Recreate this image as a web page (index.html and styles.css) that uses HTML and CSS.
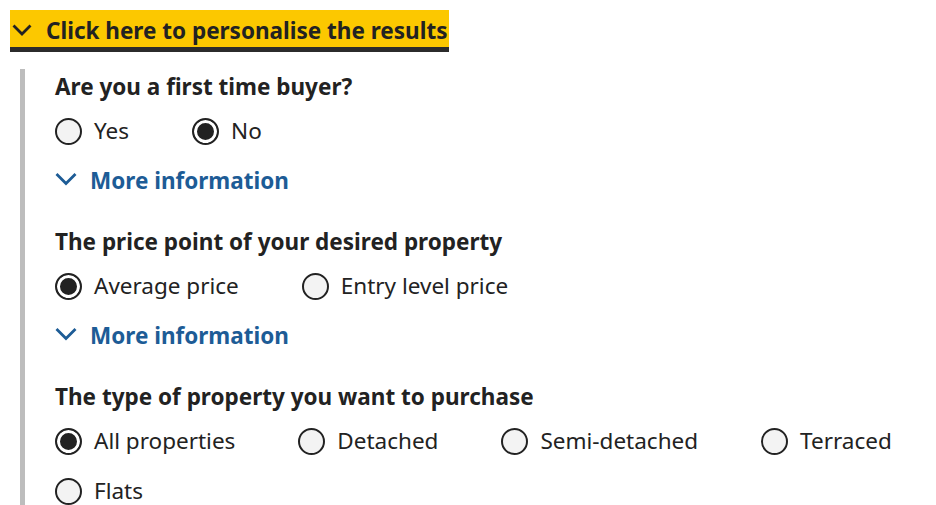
FILE: index.html
```html
<!DOCTYPE html>
<html lang="en">
<head>
<meta charset="utf-8">
<title>Personalise results</title>
<link rel="stylesheet" href="styles.css">
</head>
<body>
<div class="toggle">
  <svg class="chev" viewBox="0 0 20 20" width="20" height="20"><path d="M1.5 5.5 L10 14 L18.5 5.5" fill="none" stroke="#222" stroke-width="2.8"/></svg>
  <span>Click here to personalise the results</span>
</div>
<div class="panel">
  <div class="group">
    <div class="q">Are you a first time buyer?</div>
    <div class="opts">
      <label class="opt"><span class="radio"></span>Yes</label>
      <label class="opt"><span class="radio on"></span>No</label>
    </div>
    <div class="more"><svg class="mchev" viewBox="0 0 22 20" width="22" height="20"><path d="M1.5 5 L11 14.5 L20.5 5" fill="none" stroke="#1d5c96" stroke-width="2.8"/></svg>More information</div>
  </div>
  <div class="group">
    <div class="q">The price point of your desired property</div>
    <div class="opts">
      <label class="opt"><span class="radio on"></span>Average price</label>
      <label class="opt"><span class="radio"></span>Entry level price</label>
    </div>
    <div class="more"><svg class="mchev" viewBox="0 0 22 20" width="22" height="20"><path d="M1.5 5 L11 14.5 L20.5 5" fill="none" stroke="#1d5c96" stroke-width="2.8"/></svg>More information</div>
  </div>
  <div class="group">
    <div class="q">The type of property you want to purchase</div>
    <div class="opts">
      <label class="opt"><span class="radio on"></span>All properties</label>
      <label class="opt"><span class="radio"></span>Detached</label>
      <label class="opt"><span class="radio"></span>Semi-detached</label>
      <label class="opt"><span class="radio"></span>Terraced</label>
      <label class="opt"><span class="radio"></span>Flats</label>
    </div>
  </div>
</div>
</body>
</html>
```
FILE: styles.css
```css
html, body { margin: 0; padding: 0; background: #fff; overflow: hidden; }
body {
  padding: 10px;
  font-family: "Noto Sans", "Open Sans", sans-serif;
  color: #222;
  font-size: 22.5px;
  height: 485px;
}
.toggle {
  box-sizing: border-box;
  display: inline-flex;
  align-items: center;
  background: #fcc800;
  border-bottom: 5px solid #2b2b2b;
  height: 42px;
  padding: 4px 1px 0 2px;
  font-weight: 700;
  color: #222;
}
.chev { margin-right: 14px; margin-top: -2px; }
.panel {
  margin-top: 17px;
  margin-left: 10px;
  border-left: 5px solid #bdbdbd;
  padding-left: 30px;
  padding-top: 1px;
}
.group { margin-bottom: 28px; }
.q {
  font-weight: 700;
  line-height: 34px;
  height: 34px;
}
.opts {
  display: flex;
  flex-wrap: wrap;
  column-gap: 63px;
  row-gap: 16px;
  margin-top: 10px;
}
.opt {
  display: flex;
  align-items: center;
  height: 34px;
  line-height: 34px;
}
.radio {
  box-sizing: border-box;
  width: 27px;
  height: 27px;
  border: 2.5px solid #222;
  border-radius: 50%;
  background: #f3f3f3;
  margin-right: 12px;
  display: inline-block;
}
.radio.on {
  background: #222;
  box-shadow: inset 0 0 0 3px #fff;
}
.more {
  display: flex;
  align-items: center;
  color: #1d5c96;
  font-weight: 700;
  height: 34px;
  margin-top: 15px;
}
.mchev { margin-right: 13px; margin-left: 0; margin-top: -3px; }
```
